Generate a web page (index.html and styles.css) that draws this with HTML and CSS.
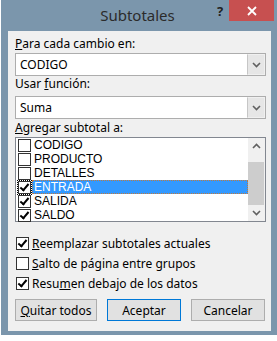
FILE: index.html
```html
<!DOCTYPE html>
<html lang="es">
  <head>
    <meta charset="UTF-8" />
    <title>Subtotales</title>
    <link rel="stylesheet" href="styles.css">
  </head>
  <body>
    <div class="window">
      <div class="titlebar">
        <div class="title">Subtotales</div>
        <div class="help">?</div>
        <div class="close">
          <svg width="10" height="10" viewBox="0 0 10 10">
            <path d="M1 1L9 9M9 1L1 9" stroke="#fff" stroke-width="1.8" />
          </svg>
        </div>
      </div>

      <div class="client">
        <div class="label"><u>P</u>ara cada cambio en:</div>
        <div class="combo">
          <span class="combo-text">CODIGO</span>
          <span class="drop">
            <svg width="9" height="6" viewBox="0 0 9 6"><path d="M1 1L4.5 4.5L8 1" fill="none" stroke="#606060" stroke-width="1.6" /></svg>
          </span>
        </div>

        <div class="label label-2">Usar <u>f</u>unción:</div>
        <div class="combo combo-2">
          <span class="combo-text">Suma</span>
          <span class="drop">
            <svg width="9" height="6" viewBox="0 0 9 6"><path d="M1 1L4.5 4.5L8 1" fill="none" stroke="#606060" stroke-width="1.6" /></svg>
          </span>
        </div>

        <div class="label label-3"><u>A</u>gregar subtotal a:</div>
        <div class="list">
          <div class="items">
            <div class="item"><span class="box"></span><span class="item-text">CODIGO</span></div>
            <div class="item"><span class="box"></span><span class="item-text">PRODUCTO</span></div>
            <div class="item"><span class="box"></span><span class="item-text">DETALLES</span></div>
            <div class="item selected"><span class="box checked focus"></span><span class="item-text">ENTRADA</span></div>
            <div class="item"><span class="box checked"></span><span class="item-text">SALIDA</span></div>
            <div class="item"><span class="box checked"></span><span class="item-text">SALDO</span></div>
          </div>
          <div class="scrollbar">
            <span class="arrow">
              <svg width="9" height="6" viewBox="0 0 9 6"><path d="M1 5L4.5 1.5L8 5" fill="none" stroke="#606060" stroke-width="1.6" /></svg>
            </span>
            <div class="track"><div class="thumb"></div></div>
            <span class="arrow">
              <svg width="9" height="6" viewBox="0 0 9 6"><path d="M1 1L4.5 4.5L8 1" fill="none" stroke="#606060" stroke-width="1.6" /></svg>
            </span>
          </div>
        </div>

        <div class="options">
          <div class="option"><span class="box checked"></span><span><u>R</u>eemplazar subtotales actuales</span></div>
          <div class="option"><span class="box"></span><span><u>S</u>alto de página entre grupos</span></div>
          <div class="option"><span class="box checked"></span><span>Resu<u>m</u>en debajo de los datos</span></div>
        </div>

        <div class="buttons">
          <button class="btn btn-wide"><u>Q</u>uitar todos</button>
          <button class="btn default">Aceptar</button>
          <button class="btn">Cancelar</button>
        </div>
      </div>
    </div>
  </body>
</html>
```

FILE: styles.css
```css
body {
  margin: 0;
  padding: 0;
  width: 277px;
  height: 341px;
  overflow: hidden;
  background-color: #ffffff;
  font-family: "Noto Sans", "Liberation Sans", sans-serif;
  font-size: 12px;
  color: #000;
}

.window {
  margin-left: 1px;
  width: 276px;
  height: 335px;
  box-sizing: border-box;
  padding: 0 6px 4px 7px;
  background-color: #7b96ac;
  display: flex;
  flex-direction: column;
}

.titlebar {
  position: relative;
  height: 31px;
  flex-shrink: 0;
}

.title {
  text-align: center;
  font-size: 15px;
  line-height: 30px;
  color: #2b2b2b;
  padding-right: 4px;
}

.help {
  position: absolute;
  top: 2px;
  left: 209px;
  font-weight: bold;
  font-size: 13px;
  color: #222;
}

.close {
  position: absolute;
  top: 0;
  right: -3px;
  width: 45px;
  height: 21px;
  background-color: #c75050;
  display: flex;
  justify-content: center;
  align-items: center;
}

.client {
  flex: 1;
  background-color: #f0f0f0;
  padding: 5px 5px 0 7px;
  display: flex;
  flex-direction: column;
}

.label {
  line-height: 16px;
  height: 16px;
}

.label-3 {
  margin-top: 1px;
}

.combo {
  margin-top: 1px;
  height: 23px;
  box-sizing: border-box;
  border: 1px solid #adadad;
  background-color: #fff;
  display: flex;
  align-items: stretch;
}

.combo-2 {
  margin-top: 4px;
}

.combo-text {
  flex: 1;
  padding-left: 4px;
  line-height: 21px;
}

.drop {
  width: 16px;
  border: 1px solid #f0f0f0;
  border-left: 1px solid #c6c6c6;
  background-color: #e6e6e6;
  display: flex;
  justify-content: center;
  align-items: center;
}

.list {
  margin-top: 1px;
  height: 85px;
  box-sizing: border-box;
  border: 1px solid #828790;
  background-color: #fff;
  display: flex;
}

.items {
  flex: 1;
}

.item {
  height: 14px;
  display: flex;
  align-items: center;
}

.item .box {
  margin-left: 2px;
  margin-right: 1px;
}

.item-text {
  font-family: "Liberation Sans", sans-serif;
  font-size: 12px;
  padding: 0 2px;
  line-height: 14px;
  height: 14px;
  flex: 1;
  box-sizing: border-box;
}

.item.selected .item-text {
  background-color: #3399ff;
  color: #fff;
  outline: 1px dotted #c27a3c;
  outline-offset: -1px;
}

.box {
  width: 13px;
  height: 13px;
  box-sizing: border-box;
  border: 1px solid #333;
  background-color: #fff;
  flex-shrink: 0;
  position: relative;
}

.box.checked::after {
  content: "";
  position: absolute;
  left: 3px;
  top: 0px;
  width: 3px;
  height: 7px;
  border-right: 2px solid #000;
  border-bottom: 2px solid #000;
  transform: rotate(40deg);
}

.box.focus {
  outline: 1px dotted #000;
  outline-offset: 0;
}

.scrollbar {
  width: 17px;
  background-color: #f0f0f0;
  display: flex;
  flex-direction: column;
}

.arrow {
  height: 17px;
  display: flex;
  justify-content: center;
  align-items: center;
}

.track {
  flex: 1;
  padding: 7px 1px 0 0;
}

.thumb {
  height: 43px;
  background-color: #cdcdcd;
}

.options {
  margin-top: 11px;
  display: flex;
  flex-direction: column;
}

.option {
  height: 20px;
  display: flex;
  align-items: center;
  gap: 3px;
  padding-left: 1px;
}

.buttons {
  margin-top: 6px;
  display: flex;
  gap: 10px;
}

.btn {
  width: 74px;
  height: 22px;
  padding: 0;
  border: 1px solid #adadad;
  background-color: #e1e1e1;
  font-family: inherit;
  font-size: 12px;
  color: #000;
}

.btn-wide {
  width: 82px;
}

.btn.default {
  border-color: #0078d7;
}
```
